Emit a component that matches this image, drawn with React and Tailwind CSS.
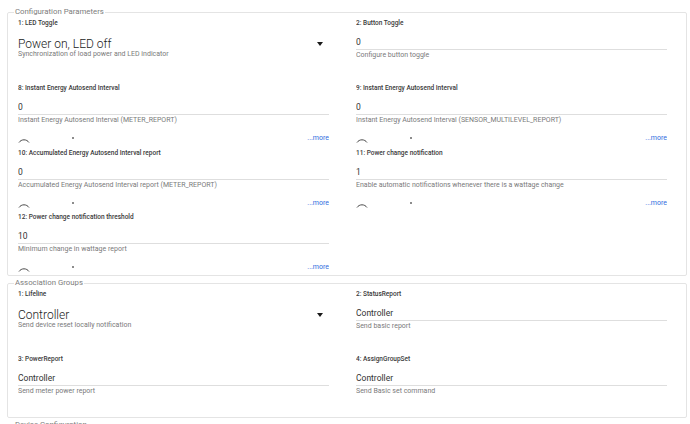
const config = [
  { label: '1: LED Toggle', value: 'Power on, LED off', desc: 'Synchronization of load power and LED indicator', select: true },
  { label: '2: Button Toggle', value: '0', desc: 'Configure button toggle' },
  { label: '8: Instant Energy Autosend Interval', value: '0', desc: 'Instant Energy Autosend Interval (METER_REPORT)', more: true },
  { label: '9: Instant Energy Autosend Interval', value: '0', desc: 'Instant Energy Autosend Interval (SENSOR_MULTILEVEL_REPORT)', more: true },
  { label: '10: Accumulated Energy Autosend Interval report', value: '0', desc: 'Accumulated Energy Autosend Interval report (METER_REPORT)', more: true },
  { label: '11: Power change notification', value: '1', desc: 'Enable automatic notifications whenever there is a wattage change', more: true },
  { label: '12: Power change notification threshold', value: '10', desc: 'Minimum change in wattage report', more: true },
];

const groups = [
  { label: '1: Lifeline', value: 'Controller', desc: 'Send device reset locally notification', select: true },
  { label: '2: StatusReport', value: 'Controller', desc: 'Send basic report' },
  { label: '3: PowerReport', value: 'Controller', desc: 'Send meter power report' },
  { label: '4: AssignGroupSet', value: 'Controller', desc: 'Send Basic set command' },
];

function Field({ item }) {
  return (
    <div className="flex flex-col overflow-hidden">
      <div className="h-[8px] leading-[8px] text-[6.5px] font-medium text-[#3a3a3a] whitespace-nowrap">{item.label}</div>
      {item.select ? (
        <>
          <div className="mt-[10px] h-[13px] flex items-center justify-between pr-[6px]">
            <span className="text-[12px] leading-[14px] font-light text-[#222]">{item.value}</span>
            <span className="w-0 h-0 border-x-[3.5px] border-x-transparent border-t-[4px] border-t-[#1a1a1a]" />
          </div>
          <div className="h-[8px] leading-[8px] text-[7px] text-[#7a7a7a] whitespace-nowrap">{item.desc}</div>
        </>
      ) : (
        <>
          <div className="mt-[10px] h-[13px] leading-[10px] text-[8.5px] text-[#333] border-b border-[#dedede]">{item.value}</div>
          <div className="mt-[1px] h-[8px] leading-[8px] text-[7px] text-[#7a7a7a] whitespace-nowrap">{item.desc}</div>
        </>
      )}
      {item.more && (
        <div className="mt-[10px] h-[10px] flex items-start justify-between">
          <div className="flex items-start">
            <svg width="12" height="6" viewBox="0 0 12 6" className="mt-[3px]">
              <path d="M1 5.5 A6 6 0 0 1 11 5.5" fill="none" stroke="#4a4a4a" strokeWidth="1" />
            </svg>
            <span className="ml-[42px] mt-[3px] w-[2px] h-[2px] rounded-full bg-[#666]" />
          </div>
          <span className="text-[7px] leading-[8px] text-[#2f6ee0]">...more</span>
        </div>
      )}
    </div>
  );
}

function Section({ title, rows, items }) {
  return (
    <fieldset className="ml-[7px] w-[680px] border border-[#e4e4e4] rounded-[2px] mb-[2px]">
      <legend className="ml-[6px] px-[1px] text-[7.8px] leading-[10px] text-[#7d7d7d]">{title}</legend>
      <div className={`grid grid-cols-[311px_311px] gap-x-[27px] pl-[10px] pt-[2px] ${rows}`}>
        {items.map((item) => (
          <Field key={item.label} item={item} />
        ))}
      </div>
    </fieldset>
  );
}

export default function App() {
  return (
    <div className="w-[690px] h-[424px] overflow-hidden bg-white pt-[7px] font-['Roboto',sans-serif]">
      <Section title="Configuration Parameters" rows="grid-rows-[65px_65px_64px_62px]" items={config} />
      <Section title="Association Groups" rows="grid-rows-[65px_62px]" items={groups} />
      <Section title="Device Configuration" rows="grid-rows-[20px]" items={[]} />
    </div>
  );
}
